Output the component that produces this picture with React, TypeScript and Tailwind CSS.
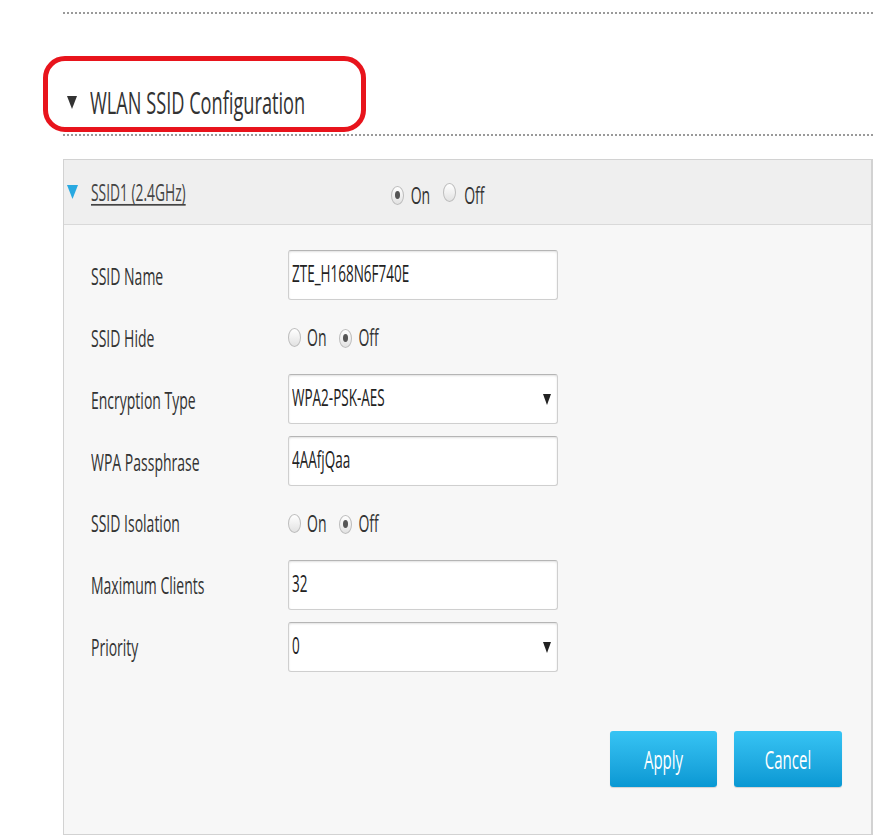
import React from 'react';

// text in the capture is stretched vertically, so every label gets the same stretch
const T: React.FC<{ children: React.ReactNode; className?: string }> = ({ children, className = '' }) => (
  <span className={`inline-block scale-y-[1.7] leading-none ${className}`}>{children}</span>
);

const Radio: React.FC<{ checked?: boolean }> = ({ checked }) => (
  <span className="inline-flex items-center justify-center w-[13px] h-[19px] rounded-[50%] border border-[#bdbdbd] bg-gradient-to-b from-white to-[#e2e2e2]">
    {checked && <span className="w-[5px] h-[8px] rounded-[50%] bg-[#555]" />}
  </span>
);

const RadioPair: React.FC<{ on: boolean }> = ({ on }) => (
  <div className="flex items-center text-[14px] text-[#333]">
    <Radio checked={on} />
    <T className="ml-[6px]">On</T>
    <span className="ml-[13px]"><Radio checked={!on} /></span>
    <T className="ml-[6px]">Off</T>
  </div>
);

const Arrow: React.FC<{ className?: string }> = ({ className = '' }) => (
  <svg width="8" height="11" viewBox="0 0 8 11" className={className}>
    <polygon points="0,0 8,0 4,11" fill="#222" />
  </svg>
);

const Field: React.FC<{ value: string; select?: boolean }> = ({ value, select }) => (
  <div className="w-[270px] h-[50px] bg-white border border-[#cfcfcf] border-t-[#b5b5b5] rounded-[3px] shadow-[inset_0_1px_2px_rgba(0,0,0,0.12)] flex items-center pl-[2px] pr-[6px] text-[13.5px] text-[#222]">
    <T className="ml-[1px]">{value}</T>
    {select && <Arrow className="ml-auto" />}
  </div>
);

const Row: React.FC<{ label: string; children: React.ReactNode }> = ({ label, children }) => (
  <div className="flex items-center h-[50px] mb-[12px]">
    <div className="w-[197px] text-[14px] text-[#333]">
      <T>{label}</T>
    </div>
    {children}
  </div>
);

export default function App() {
  return (
    <div className="w-[894px] h-[837px] bg-white overflow-hidden font-['Open_Sans',sans-serif] text-[#333]">
      <div className="ml-[63px] w-[810px]">
        <div className="mt-[12px] border-t-2 border-dotted border-[#9a9a9a]" />

        <div className="relative mt-[76px] mb-[20px] h-[24px] flex items-center">
          <div className="absolute left-[-20px] top-[-34px] w-[323px] h-[76px] border-[5px] border-[#e8141c] rounded-[22px]" />
          <svg width="10" height="13" viewBox="0 0 10 13" className="ml-[4px]">
            <polygon points="0,0 10,0 5,13" fill="#333" />
          </svg>
          <T className="ml-[13px] text-[18.2px] text-[#333]">WLAN SSID Configuration</T>
        </div>

        <div className="border-t-2 border-dotted border-[#9a9a9a]" />

        <div className="mt-[23px] border border-[#d2d2d2] border-r-2">
          <div className="h-[65px] bg-[#efefef] border-b border-[#d9d9d9] flex items-center">
            <svg width="11" height="14" viewBox="0 0 11 14" className="ml-[3px]">
              <polygon points="0,0 11,0 5.5,14" fill="#29a9e1" />
            </svg>
            <T className="ml-[13px] text-[13.8px] text-[#444] underline underline-offset-2">SSID1 (2.4GHz)</T>
            <div className="ml-[205px] mt-[6px] flex items-center text-[14px] text-[#333]">
              <Radio checked />
              <T className="ml-[7px]">On</T>
              <span className="ml-[13px]"><Radio /></span>
              <T className="ml-[8px]">Off</T>
            </div>
          </div>

          <div className="bg-[#f7f7f7] pt-[25px] pl-[27px] pr-[29px] pb-[47px]">
            <Row label="SSID Name"><Field value="ZTE_H168N6F740E" /></Row>
            <Row label="SSID Hide"><RadioPair on={false} /></Row>
            <Row label="Encryption Type"><Field value="WPA2-PSK-AES" select /></Row>
            <Row label="WPA Passphrase"><Field value="4AAfjQaa" /></Row>
            <Row label="SSID Isolation"><RadioPair on={false} /></Row>
            <Row label="Maximum Clients"><Field value="32" /></Row>
            <Row label="Priority"><Field value="0" select /></Row>

            <div className="mt-[59px] flex justify-end gap-[17px]">
              <button className="w-[107px] h-[56px] rounded-[3px] bg-gradient-to-b from-[#36c4f4] to-[#0898d3] text-white text-[15px] shadow-[0_1px_1px_rgba(0,0,0,0.15)]">
                <T>Apply</T>
              </button>
              <button className="w-[108px] h-[56px] rounded-[3px] bg-gradient-to-b from-[#36c4f4] to-[#0898d3] text-white text-[15px] shadow-[0_1px_1px_rgba(0,0,0,0.15)]">
                <T>Cancel</T>
              </button>
            </div>
          </div>
        </div>
      </div>
    </div>
  );
}
